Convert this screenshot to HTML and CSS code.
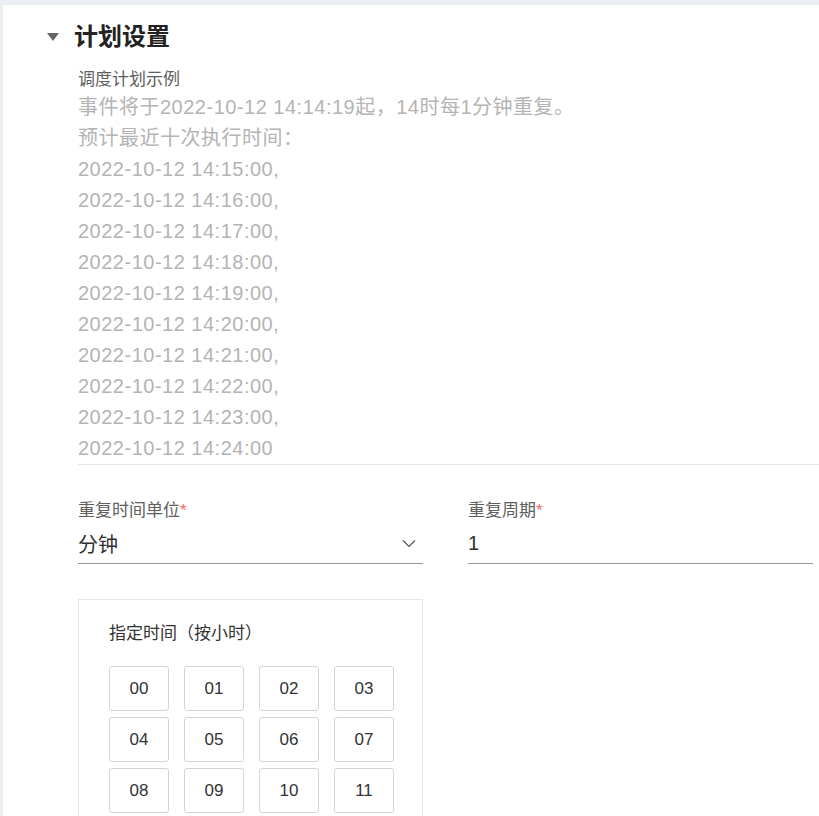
FILE: index.html
```html
<!DOCTYPE html>
<html lang="zh-CN">
<head>
<meta charset="utf-8">
<title>计划设置</title>
<link rel="stylesheet" href="styles.css">
</head>
<body>
<div class="panel">
  <div class="section-head">
    <span class="caret"></span>
    <h2 class="section-title">计划设置</h2>
  </div>
  <div class="content">
    <div class="example">
      <div class="example-label">调度计划示例</div>
      <div class="example-text">
        <div>事件将于2022-10-12 14:14:19起，14时每1分钟重复。</div>
        <div>预计最近十次执行时间：</div>
        <div>2022-10-12 14:15:00,</div>
        <div>2022-10-12 14:16:00,</div>
        <div>2022-10-12 14:17:00,</div>
        <div>2022-10-12 14:18:00,</div>
        <div>2022-10-12 14:19:00,</div>
        <div>2022-10-12 14:20:00,</div>
        <div>2022-10-12 14:21:00,</div>
        <div>2022-10-12 14:22:00,</div>
        <div>2022-10-12 14:23:00,</div>
        <div>2022-10-12 14:24:00</div>
      </div>
    </div>
    <div class="form-row">
      <div class="field">
        <div class="field-label">重复时间单位<span class="req">*</span></div>
        <div class="field-input select">
          <span class="value">分钟</span>
          <svg class="chevron" width="14" height="9" viewBox="0 0 14 9"><path d="M1 1.5 L7 7.5 L13 1.5" fill="none" stroke="#555" stroke-width="1.2"/></svg>
        </div>
      </div>
      <div class="field">
        <div class="field-label">重复周期<span class="req">*</span></div>
        <div class="field-input">
          <span class="value">1</span>
        </div>
      </div>
    </div>
    <div class="hour-box">
      <div class="hour-title">指定时间（按小时）</div>
      <div class="hour-grid">
        <div class="hour">00</div><div class="hour">01</div><div class="hour">02</div><div class="hour">03</div>
        <div class="hour">04</div><div class="hour">05</div><div class="hour">06</div><div class="hour">07</div>
        <div class="hour">08</div><div class="hour">09</div><div class="hour">10</div><div class="hour">11</div>
      </div>
    </div>
  </div>
</div>
</body>
</html>
```
FILE: styles.css
```css
html, body {
  margin: 0;
  padding: 0;
}
body {
  background: #eaedf1;
  padding: 5px 0 0 3px;
  font-family: "Liberation Sans", "Noto Sans CJK SC", sans-serif;
  height: 816px;
  overflow: hidden;
  box-sizing: border-box;
}
.panel {
  background: #fff;
  min-height: 900px;
  padding-top: 15px;
}
.section-head {
  display: flex;
  align-items: center;
  height: 34px;
  padding-left: 44px;
}
.caret {
  width: 0;
  height: 0;
  border-left: 6.5px solid transparent;
  border-right: 6.5px solid transparent;
  border-top: 8px solid #666;
  margin-right: 15px;
  margin-top: -1px;
}
.section-title {
  margin: 0;
  font-size: 24px;
  font-weight: bold;
  color: #222;
  line-height: 34px;
}
.content {
  padding-left: 75px;
}
.example {
  margin-top: 14px;
  border-bottom: 1px solid #e4e4e4;
}
.example-label {
  font-size: 17px;
  line-height: 24px;
  color: #606060;
}
.example-text {
  font-size: 20px;
  line-height: 31px;
  color: #b4b4b4;
  letter-spacing: 0.5px;
}
.form-row {
  display: flex;
  gap: 45px;
  margin-top: 34px;
}
.field {
  width: 345px;
}
.field-label {
  font-size: 17px;
  line-height: 24px;
  color: #606060;
}
.req {
  color: #f56c6c;
}
.field-input {
  height: 40px;
  border-bottom: 1px solid #999;
  display: flex;
  align-items: center;
  justify-content: space-between;
}
.value {
  font-size: 20px;
  color: #303030;
}
.chevron {
  margin-right: 7px;
}
.hour-box {
  width: 313px;
  border: 1px solid #e6e6e6;
  margin-top: 35px;
  padding: 22px 0 40px 30px;
}
.hour-title {
  font-size: 17px;
  line-height: 24px;
  color: #333;
}
.hour-grid {
  margin-top: 20px;
  display: grid;
  grid-template-columns: repeat(4, 60px);
  column-gap: 15px;
  row-gap: 6px;
}
.hour {
  height: 45px;
  box-sizing: border-box;
  border: 1px solid #d4d4d4;
  border-radius: 3px;
  display: flex;
  align-items: center;
  justify-content: center;
  font-size: 17px;
  color: #333;
}
```
